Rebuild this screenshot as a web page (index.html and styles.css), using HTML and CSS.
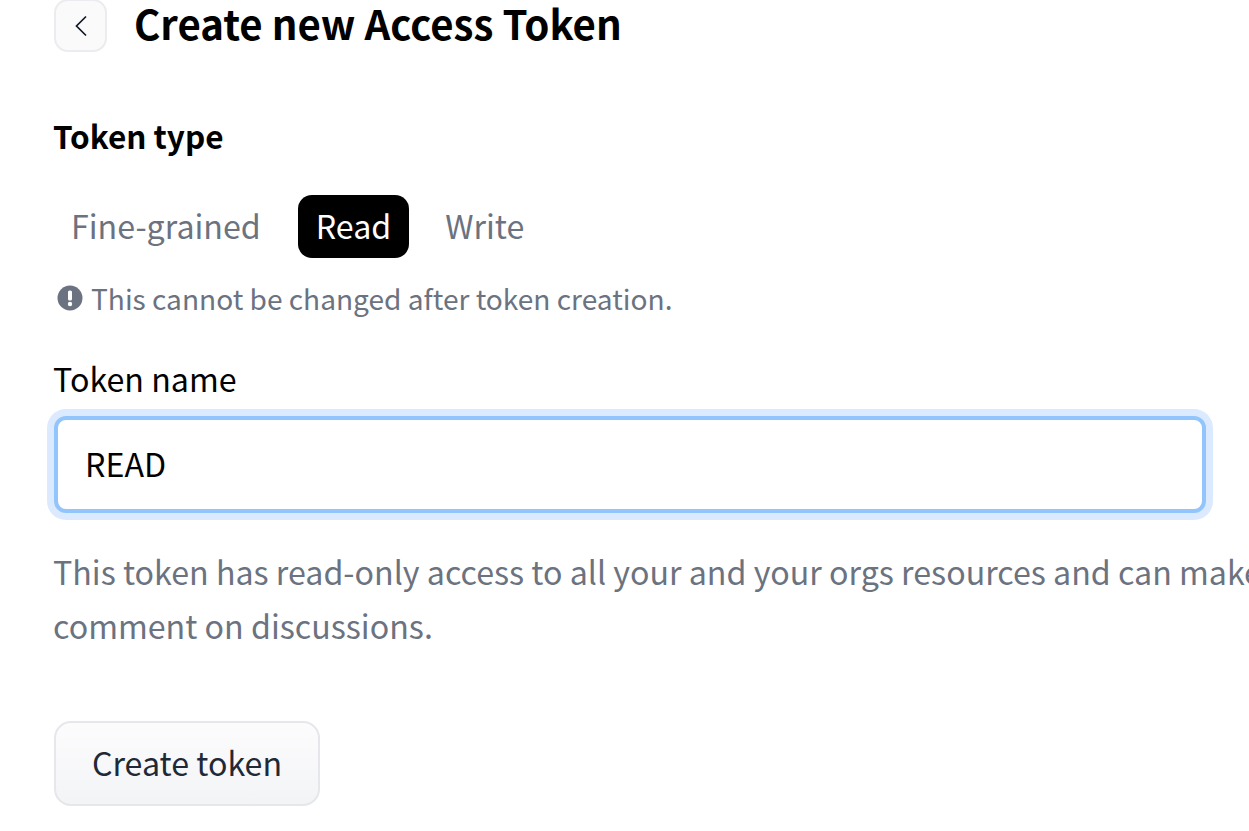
FILE: index.html
```html
<!DOCTYPE html>
<html lang="en">
<head>
	<meta charset="UTF-8">
	<title>Create new Access Token</title>
	<link rel="stylesheet" href="styles.css">
</head>
<body>
	<main class="page">
		<header class="top">
			<a class="back" href="#">
				<svg width="14" height="22" viewBox="0 0 14 22" fill="none" stroke="#111827" stroke-width="1.7">
					<path d="M12 1.5 L2.5 11 L12 20.5"/>
				</svg>
			</a>
			<h1>Create new Access Token</h1>
		</header>

		<h2>Token type</h2>
		<nav class="tabs">
			<span class="tab">Fine-grained</span>
			<span class="tab active">Read</span>
			<span class="tab">Write</span>
		</nav>
		<p class="hint">
			<svg width="26" height="26" viewBox="0 0 26 26">
				<circle cx="13" cy="13" r="12.5" fill="#6b7280"/>
				<rect x="11" y="5.5" width="4" height="10" rx="1.6" fill="#fff"/>
				<circle cx="13" cy="19" r="2.2" fill="#fff"/>
			</svg>
			This cannot be changed after token creation.
		</p>

		<label class="name-label" for="tokenName">Token name</label>
		<input class="name-input" id="tokenName" type="text" value="READ">

		<p class="desc">This token has read-only access to all your and your orgs resources and can make<br>comment on discussions.</p>

		<button class="create">Create token</button>
	</main>
</body>
</html>
```

FILE: styles.css
```css
html, body {
	margin: 0;
	height: 100%;
	overflow: hidden;
	background: #fff;
}
body {
	font-family: "Noto Sans CJK JP", "Noto Sans", sans-serif;
	color: #000;
}
.page {
	display: flex;
	flex-direction: column;
	align-items: flex-start;
	margin-top: -1px;
	padding-left: 54px;
	width: 1152px;
}

/* header */
.top {
	display: flex;
	align-items: center;
	gap: 27px;
}
.back {
	display: flex;
	align-items: center;
	justify-content: center;
	box-sizing: border-box;
	width: 53px;
	height: 53px;
	border: 2px solid #ececf0;
	border-radius: 14px;
	background: #fafafb;
}
.top h1 {
	margin: 0 0 6px;
	font-size: 40.2px;
	line-height: 40px;
	font-weight: 700;
}
h2 {
	margin: 59px 0 0 -1px;
	font-size: 31.5px;
	line-height: 48px;
	font-weight: 600;
}

/* tabs */
.tabs {
	display: flex;
	margin: 36px 0 0 -1px;
}
.tab {
	padding: 0 18px;
	height: 63px;
	line-height: 61px;
	font-size: 32.2px;
	color: #6b7280;
	border-radius: 14px;
}
.tab:first-child {
	margin-right: 19px;
}
.tab.active {
	background: #000;
	color: #fff;
	margin-right: 18px;
}
.hint {
	display: flex;
	align-items: center;
	gap: 8px;
	margin: 19px 0 0 3px;
	font-size: 28.1px;
	line-height: 42px;
	color: #6b7280;
}

/* form */
.name-label {
	margin: 35px 0 0 -1px;
	font-size: 32.2px;
	line-height: 48px;
}
.name-input {
	box-sizing: border-box;
	width: 100%;
	height: 97px;
	margin-top: 14px;
	padding: 0 27px 4px;
	border: 4px solid #93c5fd;
	border-radius: 12px;
	box-shadow: 0 0 0 7px #dbeafe;
	outline: none;
	font: 32.2px "Noto Sans CJK JP", "Noto Sans", sans-serif;
	color: #000;
}
.desc {
	margin: 31px 0 0 -1px;
	font-size: 32.2px;
	line-height: 54px;
	color: #6b7280;
	white-space: nowrap;
}
.create {
	box-sizing: border-box;
	width: 266px;
	height: 85px;
	margin-top: 69px;
	padding: 0 0 4px;
	border: 2px solid #e5e7eb;
	border-radius: 17px;
	background: linear-gradient(#fcfcfd, #f3f4f6);
	font: 32.2px "Noto Sans CJK JP", "Noto Sans", sans-serif;
	color: #1f2937;
}
```
